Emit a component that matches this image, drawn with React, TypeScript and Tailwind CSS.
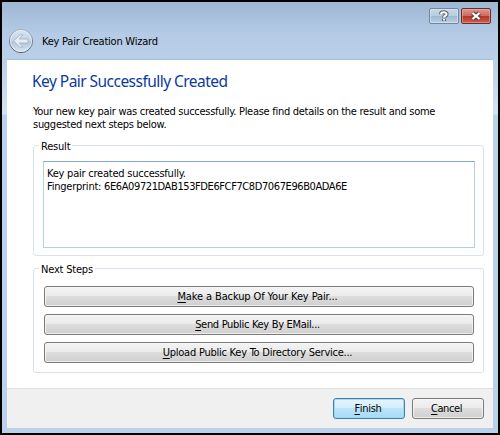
import React from "react";

const face = "font-['DejaVu_Sans_Condensed','DejaVu_Sans',sans-serif] [font-stretch:condensed]";

function WizardButton({ hot, rest, className }: { hot: string; rest: string; className: string }) {
  return (
    <button className={`flex h-[21px] items-center justify-center rounded-[3px] border whitespace-pre leading-[13px] ${className}`}>
      <span className="underline underline-offset-2 decoration-1">{hot}</span>
      <span>{rest}</span>
    </button>
  );
}

const grey =
  "w-full border-[#7b7b7b] bg-[linear-gradient(#f3f3f3_0%,#ebebeb_48%,#dddddd_50%,#cfcfcf_100%)] shadow-[inset_0_0_0_1px_#f8f8f8bb]";

function Group({ title, className, children }: { title: string; className: string; children: React.ReactNode }) {
  return (
    <section className={`rounded-[3px] border border-[#d9e3ec] ${className}`}>
      <h2 className="-mt-[7px] ml-[5px] h-[13px] w-fit bg-white px-[2px] leading-[15px] tracking-[-0.2px]">{title}</h2>
      {children}
    </section>
  );
}

export default function App() {
  return (
    <div className={`h-[435px] w-[500px] overflow-hidden border-2 border-black bg-[#b9d1ea] text-[11px] text-black ${face}`}>
      <div className="flex h-[431px] flex-col bg-[linear-gradient(#9db8d3_0px,#b6cce6_34px,#bad0e9_60px,#d4e2f3_112px,#b9d1ea_113px)] px-[5px] pb-[5px]">
        <header className="h-[58px] shrink-0 border-b border-[#a8bfda]">
          <div className="flex h-[22px] items-start justify-end gap-[2px] pt-[6px] pr-[2px]">
            <button aria-label="Help" className="flex h-[16px] w-[30px] items-center justify-center rounded-[2px] border border-[#71869c] bg-[linear-gradient(#c5d8e9_0%,#b8cde1_48%,#9db7d0_50%,#b8d0e5_100%)] shadow-[inset_0_0_0_1px_#dce9f5aa]">
              <svg width="10" height="12" viewBox="0 0 10 12" fill="none">
                <path d="M2 4.2C2 1.8 7.6 1.6 7.6 4.2C7.6 5.8 5 5.6 5 7.6M5 8.8V11" stroke="#5c6070" strokeWidth="4" />
                <path d="M2 4.2C2 1.8 7.6 1.6 7.6 4.2C7.6 5.8 5 5.6 5 7.6M5 8.9V10.4" stroke="#fff" strokeWidth="2" />
              </svg>
            </button>
            <button aria-label="Close" className="flex h-[16px] w-[30px] items-center justify-center rounded-[2px] border border-[#692c35] bg-[linear-gradient(#db9b91_0%,#cd6a5d_48%,#b93220_50%,#c9634d_100%)] shadow-[inset_0_0_0_1px_#eab2a688]">
              <svg width="12" height="10" viewBox="0 0 12 10" fill="none">
                <path d="M2.5 2L9.5 8M9.5 2L2.5 8" stroke="#65424a" strokeWidth="4.6" />
                <path d="M2.5 2L9.5 8M9.5 2L2.5 8" stroke="#fff" strokeWidth="2.2" />
              </svg>
            </button>
          </div>
          <div className="flex h-[35px] items-center pl-[1px]">
            <svg width="26" height="26" viewBox="0 0 26 26" className="-mt-[1px]">
              <defs>
                <linearGradient id="ball" x1="0" y1="0" x2="0" y2="1">
                  <stop offset="0" stopColor="#d9e4f0" />
                  <stop offset=".48" stopColor="#c4d3e3" />
                  <stop offset=".55" stopColor="#b1c4d8" />
                  <stop offset="1" stopColor="#dce9f4" />
                </linearGradient>
                <linearGradient id="rim" x1="0" y1="0" x2="0" y2="1">
                  <stop offset="0" stopColor="#a0b0c2" />
                  <stop offset="1" stopColor="#4d5b6b" />
                </linearGradient>
              </defs>
              <circle cx="13" cy="13" r="11.6" fill="url(#ball)" stroke="url(#rim)" />
              <circle cx="13" cy="13" r="10.6" fill="none" stroke="#e9f1f8" strokeOpacity=".7" />
              <path d="M5.5 13L12 6.8H15L11.3 11H20V15H11.3L15 19.2H12Z" fill="#e4ebf2" stroke="#9eb0c2" strokeWidth=".8" />
            </svg>
            <h1 className="mt-[1px] ml-[8px] text-[11px] tracking-[-0.23px]">Key Pair Creation Wizard</h1>
          </div>
        </header>

        <main className="h-[328px] shrink-0 bg-white px-[26px] pt-[10px] pr-[9px]">
          <h2 className="-ml-[1px] h-[22px] font-['Noto_Sans',sans-serif] text-[15.5px] leading-[22px] tracking-[-0.54px] text-[#0b3a9f]">Key Pair Successfully Created</h2>
          <p className="mt-[13px] h-[26px] leading-[13px] tracking-[-0.28px] whitespace-pre">{"Your new key pair was created successfully. Please find details on the result and some\nsuggested next steps below."}</p>
          <Group title="Result" className="mt-[14px] h-[111px]">
            <div className="mt-[9px] ml-[9px] h-[87px] w-[432px] border border-[#b5cfe7] border-t-[#7fa9cf] px-[3px] pt-[5px] leading-[13px] tracking-[-0.23px] whitespace-pre">
              <div>Key pair created successfully.</div>
              <div>Fingerprint: <span className="tracking-[-0.4px]">6E6A09721DAB153FDE6FCF7C8D7067E96B0ADA6E</span></div>
            </div>
          </Group>
          <Group title="Next Steps" className="mt-[12px] h-[105px]">
            <div className="mt-[11px] ml-[10px] flex w-[430px] flex-col gap-[7px]">
              <WizardButton hot="M" rest="ake a Backup Of Your Key Pair..." className={`${grey} pr-[3px] tracking-[-0.12px]`} />
              <WizardButton hot="S" rest="end Public Key By EMail..." className={`${grey} pr-[3px] tracking-[-0.31px]`} />
              <WizardButton hot="U" rest="pload Public Key To Directory Service..." className={`${grey} pr-[3px] tracking-[-0.24px]`} />
            </div>
          </Group>
        </main>

        <footer className="flex h-[40px] shrink-0 items-start justify-end gap-[7px] border-t border-[#dfdfdf] bg-[#f0f0f0] pt-[9px] pr-[9px]">
          <div className="w-[72px]">
            <WizardButton hot="F" rest="inish" className="w-full border-[#457da8] bg-[linear-gradient(#e6f5fd_0%,#d5edfb_48%,#bce4fa_50%,#a5daf7_100%)] pr-[2px] tracking-[-0.3px] shadow-[inset_0_0_0_1px_#9edcf5]" />
          </div>
          <div className="w-[72px]">
            <WizardButton hot="C" rest="ancel" className={`${grey} pr-[3px] tracking-[-0.4px]`} />
          </div>
        </footer>
      </div>
    </div>
  );
}
